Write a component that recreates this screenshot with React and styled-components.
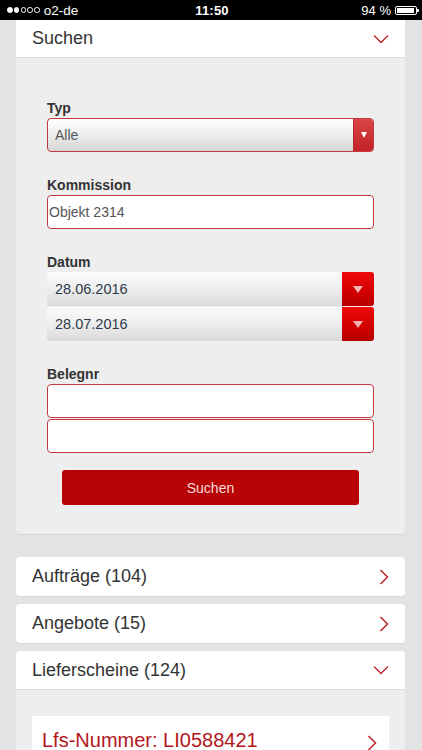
import React from "react";
import styled, { createGlobalStyle } from "styled-components";

const Global = createGlobalStyle`
  html, body { margin: 0; padding: 0; background: #e3e3e3; }
  body { font-family: "Liberation Sans", Arial, sans-serif; -webkit-font-smoothing: antialiased; }
  * { box-sizing: border-box; }
`;

const Screen = styled.div`
  width: 422px;
  height: 750px;
  overflow: hidden;
  background: #e3e3e3;
  display: flex;
  flex-direction: column;
`;

const StatusBar = styled.div`
  height: 20px;
  flex: none;
  background: #000;
  color: #fff;
  display: grid;
  grid-template-columns: 1fr auto 1fr;
  align-items: center;
  padding: 0 5px 0 7px;
  font-size: 13px;
`;

const Carrier = styled.div`
  display: flex;
  align-items: center;
  gap: 4px;
  font-size: 13.5px;
`;

const Dots = styled.div`
  display: flex;
  gap: 1.3px;
`;

const Dot = styled.span`
  width: 5.5px;
  height: 5.5px;
  border-radius: 50%;
  border: 1px solid #fff;
  background: ${(p) => (p.$on ? "#fff" : "transparent")};
`;

const Time = styled.div`
  font-weight: bold;
  font-size: 13px;
  letter-spacing: 0.2px;
`;

const Battery = styled.div`
  justify-self: end;
  display: flex;
  align-items: center;
  gap: 4px;
`;

const BatteryBody = styled.div`
  width: 22px;
  height: 9px;
  border: 1px solid #fff;
  border-radius: 2px;
  padding: 1px;
  display: flex;
  position: relative;
  &::after {
    content: "";
    position: absolute;
    right: -3px;
    top: 2px;
    width: 2px;
    height: 3px;
    background: #fff;
    border-radius: 0 1px 1px 0;
  }
`;

const BatteryFill = styled.div`
  background: #fff;
  height: 100%;
`;

const Content = styled.div`
  padding: 0 17px 0 16px;
  display: flex;
  flex-direction: column;
`;

const Panel = styled.div`
  background: #eeeeee;
  border-radius: ${(p) => (p.$flatTop ? "0 0 4px 4px" : "4px")};
  margin-top: ${(p) => p.$mt || 0}px;
  overflow: hidden;
  box-shadow: 0 0.5px 1px rgba(0, 0, 0, 0.06);
`;

const PanelHeader = styled.div`
  height: ${(p) => p.$h || 39}px;
  background: #fff;
  display: flex;
  align-items: center;
  justify-content: space-between;
  padding: 0 16px 0 16px;
  font-size: 18px;
  color: #333;
  border-bottom: ${(p) => (p.$open ? "1px solid #dedede" : "none")};
`;

const Body = styled.div`
  padding: 41px 31px 29px 31px;
  display: flex;
  flex-direction: column;
`;

const Group = styled.div`
  display: flex;
  flex-direction: column;
  margin-top: ${(p) => (p.$first ? 0 : 24)}px;
`;

const Label = styled.div`
  font-weight: bold;
  font-size: 14px;
  line-height: 18px;
  color: #333;
  margin-bottom: 1px;
`;

const SelectBox = styled.div`
  height: 34px;
  border: 1px solid #c8393d;
  border-radius: 4px;
  background: linear-gradient(#ffffff, #f1f1f1 40%, #d6d6d6);
  display: flex;
  align-items: center;
  overflow: hidden;
`;

const SelectText = styled.div`
  flex: 1;
  padding-left: 7px;
  font-size: 14px;
  color: #555;
`;

const SelectButton = styled.div`
  width: 20px;
  align-self: stretch;
  background: linear-gradient(#d94548, #c12226);
  border-left: 1px solid #b3262a;
  display: flex;
  align-items: center;
  justify-content: center;
`;

const Triangle = styled.span`
  width: 0;
  height: 0;
  border-left: ${(p) => p.$w / 2}px solid transparent;
  border-right: ${(p) => p.$w / 2}px solid transparent;
  border-top: ${(p) => p.$h}px solid ${(p) => p.$c};
`;

const TextInput = styled.div`
  height: 34px;
  border: 1px solid #c8393d;
  border-radius: 4px;
  background: #fff;
  display: flex;
  align-items: center;
  padding-left: 1px;
  font-size: 14px;
  color: #555;
  margin-top: ${(p) => (p.$stacked ? 1 : 0)}px;
`;

const DateRow = styled.div`
  height: 34px;
  border-radius: 3px;
  background: linear-gradient(#fbfbfb, #efefef 45%, #dadada);
  display: flex;
  align-items: center;
  overflow: hidden;
  margin-top: ${(p) => (p.$stacked ? 1 : 0)}px;
`;

const DateText = styled.div`
  flex: 1;
  padding-left: 8px;
  font-size: 14.5px;
  color: #2d3b4a;
`;

const DateButton = styled.div`
  width: 32px;
  align-self: stretch;
  background: linear-gradient(#ee0a0a, #d20000 55%, #b80000);
  display: flex;
  align-items: center;
  justify-content: center;
`;

const SubmitButton = styled.div`
  margin: 17px 15px 0 15px;
  height: 35px;
  border-radius: 3px;
  background: #b80404;
  color: #f7dcdc;
  font-size: 14px;
  display: flex;
  align-items: center;
  justify-content: center;
`;

const ListBody = styled.div`
  padding: 26px 16px 0 16px;
`;

const ItemCard = styled.div`
  background: #fff;
  height: 60px;
  display: flex;
  align-items: flex-start;
  justify-content: space-between;
  padding: 12px 12px 0 10px;
  font-size: 20px;
  line-height: 24px;
  color: #b2161b;
`;

const ChevronDown = () => (
  <svg width="16" height="10" viewBox="0 0 16 10">
    <path d="M1 1.5 L8 8.5 L15 1.5" fill="none" stroke="#c0262b" strokeWidth="1.4" />
  </svg>
);

const ChevronRight = ({ top }) => (
  <svg width="10" height="16" viewBox="0 0 10 16" style={top ? { marginTop: 7 } : undefined}>
    <path d="M1.5 1 L8.5 8 L1.5 15" fill="none" stroke="#c0262b" strokeWidth="1.5" />
  </svg>
);

export default function App() {
  return (
    <>
      <Global />
      <Screen>
        <StatusBar>
          <Carrier>
            <Dots>
              <Dot $on />
              <Dot $on />
              <Dot />
              <Dot />
              <Dot />
            </Dots>
            <span>o2-de</span>
          </Carrier>
          <Time>11:50</Time>
          <Battery>
            <span>94 %</span>
            <BatteryBody>
              <BatteryFill style={{ width: "94%" }} />
            </BatteryBody>
          </Battery>
        </StatusBar>

        <Content>
          <Panel $flatTop>
            <PanelHeader $h={38} $open>
              <span>Suchen</span>
              <ChevronDown />
            </PanelHeader>
            <Body>
              <Group $first>
                <Label>Typ</Label>
                <SelectBox>
                  <SelectText>Alle</SelectText>
                  <SelectButton>
                    <Triangle $w={7} $h={6} $c="#fff" />
                  </SelectButton>
                </SelectBox>
              </Group>
              <Group>
                <Label>Kommission</Label>
                <TextInput>Objekt 2314</TextInput>
              </Group>
              <Group>
                <Label>Datum</Label>
                <DateRow>
                  <DateText>28.06.2016</DateText>
                  <DateButton>
                    <Triangle $w={10} $h={7} $c="#f7b3b3" />
                  </DateButton>
                </DateRow>
                <DateRow $stacked>
                  <DateText>28.07.2016</DateText>
                  <DateButton>
                    <Triangle $w={10} $h={7} $c="#f7b3b3" />
                  </DateButton>
                </DateRow>
              </Group>
              <Group>
                <Label>Belegnr</Label>
                <TextInput />
                <TextInput $stacked />
              </Group>
              <SubmitButton>Suchen</SubmitButton>
            </Body>
          </Panel>

          <Panel $mt={23}>
            <PanelHeader>
              <span>Aufträge (104)</span>
              <ChevronRight />
            </PanelHeader>
          </Panel>
          <Panel $mt={8}>
            <PanelHeader>
              <span>Angebote (15)</span>
              <ChevronRight />
            </PanelHeader>
          </Panel>
          <Panel $mt={8}>
            <PanelHeader $open>
              <span>Lieferscheine (124)</span>
              <ChevronDown />
            </PanelHeader>
            <ListBody>
              <ItemCard>
                <span>Lfs-Nummer: LI0588421</span>
                <ChevronRight top />
              </ItemCard>
            </ListBody>
          </Panel>
        </Content>
      </Screen>
    </>
  );
}
